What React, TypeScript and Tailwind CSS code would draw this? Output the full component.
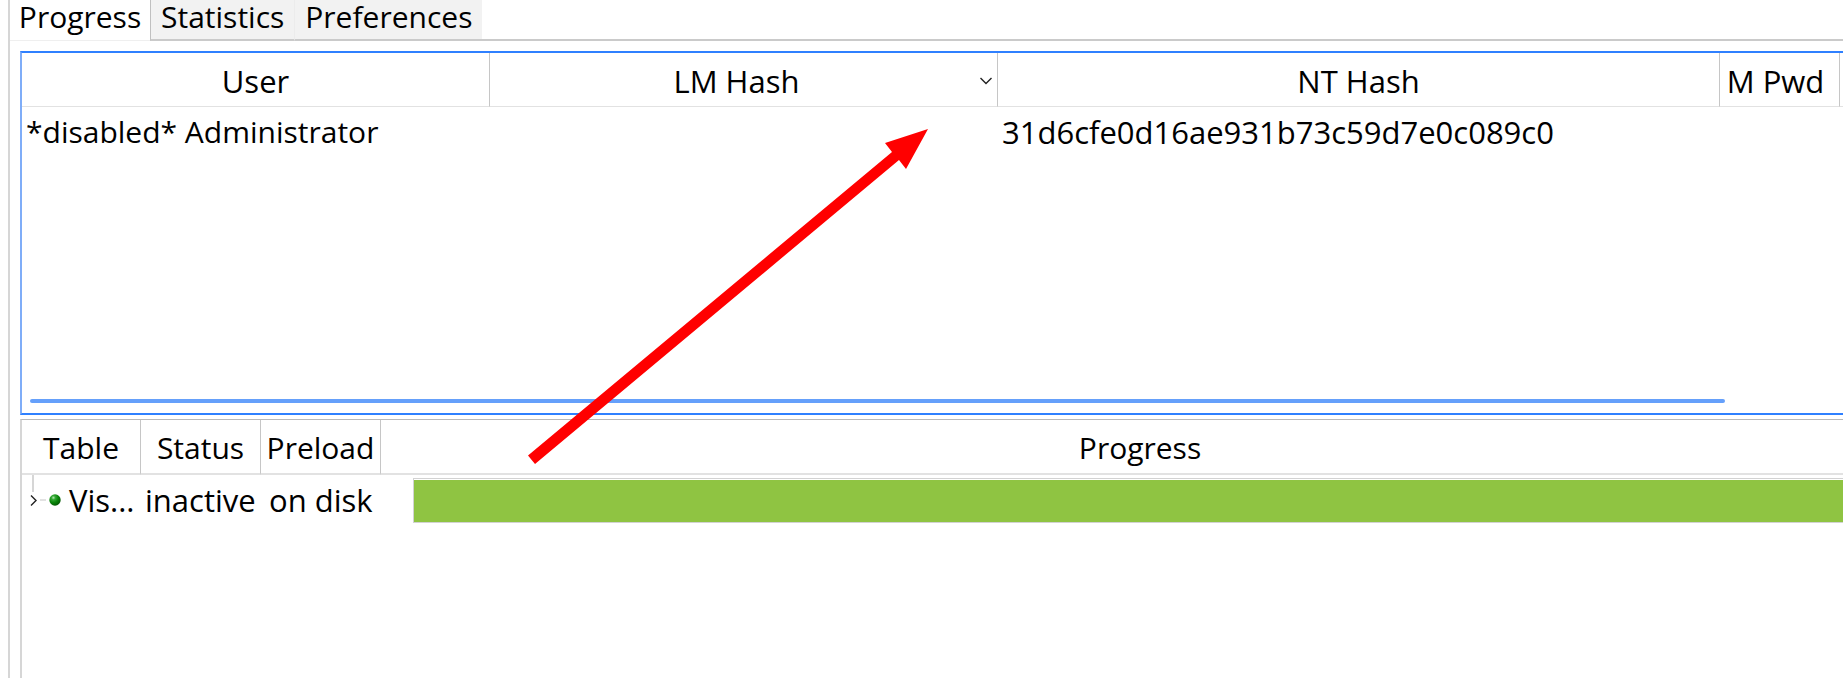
import { useState } from "react";

const tabs = ["Progress", "Statistics", "Preferences"];

const th =
  "border-r border-r-[#c6c6c6] border-b-[#e2e2e2] px-0 pt-0.5 pb-0 text-center font-normal";

function HashTable() {
  return (
    <section
      aria-label="Hashes"
      className="flex h-[364px] flex-col border-t-2 border-b-2 border-l-2 border-t-[#2f80ff] border-b-[#2f80ff] border-l-[#7fadf8] bg-white text-[31px]"
    >
      <table className="w-full table-fixed border-separate border-spacing-0">
        <colgroup>
          <col className="w-[468px]" />
          <col className="w-[508px]" />
          <col className="w-[722px]" />
          <col className="w-[120px]" />
          <col />
        </colgroup>
        <thead>
          <tr>
            <th className={`${th} h-[54px] border-b`}>User</th>
            <th className={`${th} border-b`} aria-sort="descending">
              <div className="flex items-center pr-1">
                <span className="flex-1 pl-1">LM Hash</span>
                <svg width="14" height="10" viewBox="0 0 14 10" fill="none" aria-hidden="true">
                  <path d="M1.500 2l5.500 5.500 5.500-5.500" stroke="#222" strokeWidth="1.4" />
                </svg>
              </div>
            </th>
            <th className={`${th} border-b`}>NT Hash</th>
            <th className={`${th} border-b`}>
              <div className="pr-2">M Pwd</div>
            </th>
            <th className="border-b border-[#e2e2e2] p-0" />
          </tr>
        </thead>
        <tbody>
          <tr>
            <td className="h-[50px] px-1 py-0 text-[30px] whitespace-nowrap">
              *disabled* Administrator
            </td>
            <td />
            <td className="px-1 py-0 whitespace-nowrap">31d6cfe0d16ae931b73c59d7e0c089c0</td>
            <td />
            <td />
          </tr>
        </tbody>
      </table>
      <div className="mt-auto mr-[118px] mb-2.5 ml-2 h-1 rounded-full bg-[#65a0fb]" />
    </section>
  );
}

function StatusBall() {
  return (
    <svg width="12" height="12" viewBox="0 0 12 12" aria-hidden="true">
      <defs>
        <radialGradient id="ball" cx="0.36" cy="0.3" r="0.7">
          <stop offset="0" stopColor="#b5e8b5" />
          <stop offset="0.25" stopColor="#35a835" />
          <stop offset="0.6" stopColor="#0a860a" />
          <stop offset="1" stopColor="#045c04" />
        </radialGradient>
      </defs>
      <circle cx="6" cy="6" r="5.7" fill="url(#ball)" />
    </svg>
  );
}

function RainbowTable() {
  return (
    <section
      aria-label="Tables"
      className="mt-1 flex-1 border-t border-l-2 border-t-[#b9b9b9] border-l-[#d6d6d6] bg-white"
    >
      <table className="w-full table-fixed border-separate border-spacing-0">
        <colgroup>
          <col className="w-[119px]" />
          <col className="w-[120px]" />
          <col className="w-[120px]" />
          <col />
        </colgroup>
        <thead>
          <tr>
            <th className={`${th} h-[55px] border-b-2`}>Table</th>
            <th className={`${th} border-b-2`}>Status</th>
            <th className={`${th} border-b-2`}>Preload</th>
            <th className="border-b-2 border-[#e2e2e2] pt-0.5 pr-0 pb-0 pl-14 text-center font-normal">
              Progress
            </th>
          </tr>
        </thead>
        <tbody className="text-[31px]">
          <tr>
            <td className="h-[50px] p-0">
              <div className="flex h-[50px] items-center">
                <button type="button" aria-label="Expand" className="h-[50px]">
                  <svg width="27" height="50" viewBox="0 0 27 50" fill="none" aria-hidden="true">
                    <path d="M11 0v17" stroke="#d6d6d6" strokeWidth="2" />
                    <path d="M9 20.500l5 5-5 5" stroke="#222" strokeWidth="1.4" />
                    <path d="M18 25h6" stroke="#d6d6d6" strokeWidth="1.4" />
                  </svg>
                </button>
                <StatusBall />
                <span className="pl-2">Vis...</span>
              </div>
            </td>
            <td className="px-1 py-0 whitespace-nowrap">inactive</td>
            <td className="px-2 py-0 whitespace-nowrap">on disk</td>
            <td className="py-0 pr-0 pl-8">
              <div
                role="progressbar"
                aria-label="Progress"
                className="h-[45px] border-y border-l border-[#d2d2d2] bg-white pt-px"
              >
                <div className="h-[42px] bg-[#8fc442]" />
              </div>
            </td>
          </tr>
        </tbody>
      </table>
    </section>
  );
}

export default function App() {
  const [active, setActive] = useState("Progress");
  return (
    <main className="relative flex min-h-screen overflow-hidden bg-white pl-2 font-['Open_Sans',sans-serif] text-[30px] leading-10 text-black">
      <div className="flex min-w-0 flex-1 flex-col border-l-2 border-[#d6d6d6]">
        <div role="tablist" className="flex h-[41px] leading-8">
          {tabs.map((t) => (
            <button
              key={t}
              type="button"
              role="tab"
              aria-selected={t === active}
              onClick={() => setActive(t)}
              className={
                t === active
                  ? "flex w-[140px] items-end justify-center border-b border-[#efefef] pb-[7px]"
                  : "flex items-end border-b-2 border-l border-b-[#cacaca] border-l-[#c0c0c0] bg-[#f2f2f2] px-2.5 pb-1.5 last-of-type:border-l-[#ececec]"
              }
            >
              {t}
            </button>
          ))}
          <div className="flex-1 border-b-2 border-[#cacaca]" />
        </div>
        <div className="flex flex-1 flex-col pt-2.5 pl-2.5">
          <HashTable />
          <RainbowTable />
        </div>
      </div>
      <svg
        className="pointer-events-none absolute top-[128px] left-[527px]"
        width="402"
        height="338"
        viewBox="527 128 402 338"
        aria-hidden="true"
      >
        <path d="M928 129L906 169 899 160 535 464 528 455.500 892 152 885 143z" fill="#f00" />
      </svg>
    </main>
  );
}
